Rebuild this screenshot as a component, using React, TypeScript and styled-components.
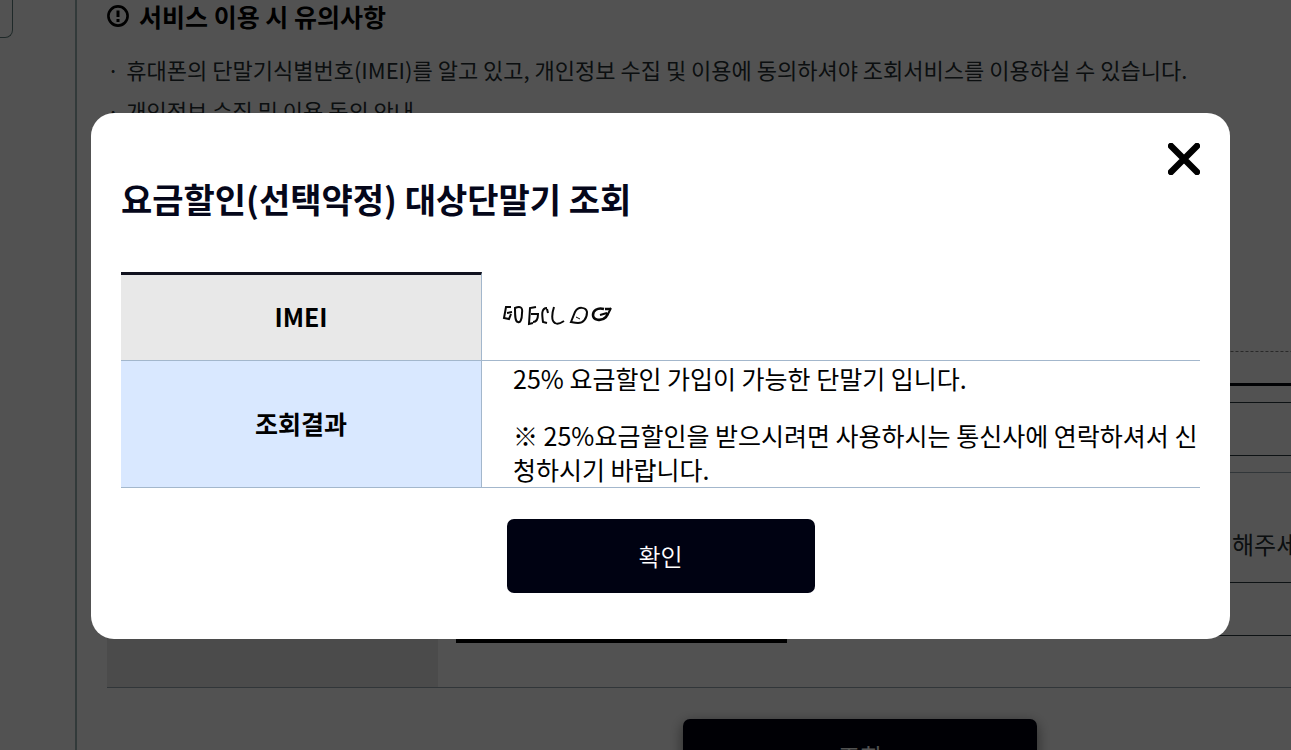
import React from 'react';
import styled, { createGlobalStyle } from 'styled-components';

const GlobalStyle = createGlobalStyle`
  * { box-sizing: border-box; }
  body {
    margin: 0;
    background: #fff;
    color: #000;
    font-family: "Noto Sans CJK KR", "Noto Sans", sans-serif;
  }
  h1, h2, p, ul { margin: 0; padding: 0; }
  button, input { font-family: inherit; }
`;

const Page = styled.div`
  display: flex;
  height: 100vh;
  overflow: hidden;
`;

const Sidebar = styled.aside`
  flex: 0 0 75px;
`;

const SideCard = styled.div`
  width: 13px;
  height: 38px;
  border: solid #62807f;
  border-width: 0 1px 1px 0;
  border-bottom-right-radius: 8px;
`;

const Content = styled.main`
  flex: 0 0 auto;
  width: 1538px;
  padding-left: 30px;
  border-left: 2px solid #9bb5b5;
`;

const NoticeTitle = styled.h2`
  display: flex;
  align-items: center;
  gap: 10px;
  height: 31px;
  font-size: 25px;
  line-height: 30px;
  font-weight: 700;
`;

const NoticeList = styled.ul`
  height: 321px;
  padding-top: 18px;
  border-bottom: 1px dashed #808080;
  list-style: none;
`;

const NoticeItem = styled.li`
  display: flex;
  gap: 7px;
  font-size: 22px;
  line-height: 41px;
  color: #263034;
  white-space: nowrap;
`;

const Form = styled.form`
  margin-top: 31px;
`;

const FormTable = styled.table`
  width: 100%;
  border-top: 3px solid #05070f;
  border-collapse: separate;
  border-spacing: 0;
  table-layout: fixed;
`;

const FormHead = styled.th`
  width: 331px;
  background: #e8e8e8;
  border-bottom: 1px solid #98a8b0;
`;

const FormCell = styled.td`
  padding: 16px 0 16px 18px;
  border-bottom: 1px solid #98a8b0;
`;

const CaptchaCell = styled(FormCell)`
  height: 215px;
  padding-bottom: 44px;
  vertical-align: bottom;
`;

const Field = styled.input`
  display: block;
  width: 100%;
  height: 54px;
  border: 1px solid #29383f;
  background: #fff;
`;

const CaptchaRow = styled.div`
  display: grid;
  grid-template-columns: 331px 1fr;
  column-gap: 429px;
  align-items: end;
`;

const CaptchaImage = styled.div`
  height: 60px;
  background: #000;
`;

const CaptchaEntry = styled.div`
  padding-bottom: 7px;
`;

const CaptchaHint = styled.p`
  padding: 0 0 21px 16px;
  font-size: 24px;
  line-height: 34px;
  color: #263034;
`;

const Button = styled.button<{ $width: number }>`
  display: block;
  width: ${(p) => p.$width}px;
  height: 74px;
  margin: 31px auto 0;
  padding: 0;
  border: 0;
  border-radius: 7px;
  background: #000212;
  color: #fff;
  font-size: 24px;
  line-height: 34px;
  font-weight: 350;
`;

const SearchButton = styled(Button)`
  box-shadow: 0 4px 14px rgba(0, 0, 0, 0.5);
`;

const Overlay = styled.div`
  position: fixed;
  inset: 0;
  padding: 113px 61px 0 91px;
  background: rgba(0, 0, 0, 0.68);
`;

const Dialog = styled.section`
  display: flex;
  flex-direction: column;
  padding: 30px 30px 46px;
  border-radius: 23px;
  background: #fff;
`;

const CloseButton = styled.button`
  align-self: flex-end;
  width: 32px;
  height: 32px;
  padding: 0;
  border: 0;
  background: none;
  svg { display: block; }
`;

const DialogTitle = styled.h1`
  margin-bottom: 50px;
  font-size: 34px;
  line-height: 47px;
  font-weight: 700;
  color: #05071a;
`;

const ResultTable = styled.table`
  width: 100%;
  border-collapse: separate;
  border-spacing: 0;
  table-layout: fixed;
`;

const ResultHead = styled.th<{ $tone: 'gray' | 'blue' }>`
  width: 361px;
  padding: 0 0 3px;
  border-top: ${(p) => (p.$tone === 'gray' ? '3px solid #11121f' : '0')};
  border-right: 1px solid #a3b7cc;
  border-bottom: 1px solid #a3b7cc;
  background: ${(p) => (p.$tone === 'gray' ? '#e8e8e8' : '#d9e8ff')};
  font-size: 25px;
  line-height: 34px;
  font-weight: 700;
`;

const ResultCell = styled.td`
  height: 89px;
  padding: 0 0 1px 31px;
  border-bottom: 1px solid #a3b7cc;
  font-size: 25px;
  line-height: 34px;
  p + p { margin-top: 23px; }
`;

const ImeiCell = styled(ResultCell)`
  padding-left: 20px;
  svg { display: block; }
`;

function ImeiScribble() {
  return (
    <svg width="112" height="24" viewBox="0 0 112 24" fill="none" stroke="#080808" strokeWidth="2" role="img" aria-label="IMEI">
      <path d="M9 3H4L2 14L7 15L9 10M5 9L10 8" strokeWidth="2" />
      <path d="M13 4C18 2 21 3 20 9C20 16 18 19 16 18C13 18 13 11 13 4Z" />
      <path d="M34 3L28 4L27 20L31 19M29 10H36C36 15 35 18 31 18" />
      <path d="M45 4C39 4 40 11 41 18L45 19M45 5L46 9" />
      <path d="M52 3C50 9 49 17 53 19C56 21 59 19 62 17" strokeWidth="2" />
      <path d="M69 18L73 8C76 2 84 3 85 8C85 15 81 19 76 19C72 19 70 18 69 18Z" />
      <path d="M74 13L78 15" strokeWidth="1" />
      <path d="M109 5H103M102 5C95 3 91 7 91 11C91 16 99 18 104 13L106 9" strokeWidth="2.6" />
      <path d="M98 11L105 9M109 4L105 12" strokeWidth="2" />
    </svg>
  );
}

export default function App() {
  return (
    <>
      <GlobalStyle />
      <Page>
        <Sidebar>
          <SideCard />
        </Sidebar>
        <Content>
          <NoticeTitle>
            <svg width="22" height="22" viewBox="0 0 22 22" fill="none" stroke="#000" aria-hidden="true">
              <circle cx="11" cy="11" r="9.6" strokeWidth="2.6" />
              <path d="M11 5.5V12" strokeWidth="3" />
              <path d="M11 14V17" strokeWidth="3" />
            </svg>
            서비스 이용 시 유의사항
          </NoticeTitle>
          <NoticeList>
            <NoticeItem>
              <span>·</span>
              휴대폰의 단말기식별번호(IMEI)를 알고 있고, 개인정보 수집 및 이용에 동의하셔야 조회서비스를 이용하실 수 있습니다.
            </NoticeItem>
            <NoticeItem>
              <span>·</span>
              개인정보 수집 및 이용 동의 안내
            </NoticeItem>
          </NoticeList>
          <Form>
            <FormTable>
              <tbody>
                <tr>
                  <FormHead scope="row" />
                  <FormCell>
                    <Field type="text" aria-label="IMEI" />
                  </FormCell>
                </tr>
                <tr>
                  <FormHead scope="row" />
                  <CaptchaCell>
                    <CaptchaRow>
                      <CaptchaImage />
                      <CaptchaEntry>
                        <CaptchaHint>해주세요.</CaptchaHint>
                        <Field type="text" aria-label="해주세요." />
                      </CaptchaEntry>
                    </CaptchaRow>
                  </CaptchaCell>
                </tr>
              </tbody>
            </FormTable>
            <SearchButton type="button" $width={354}>조회</SearchButton>
          </Form>
        </Content>
      </Page>
      <Overlay>
        <Dialog role="dialog" aria-modal="true" aria-labelledby="dialog-title">
          <CloseButton type="button" aria-label="닫기">
            <svg width="32" height="32" viewBox="0 0 32 32" fill="none" stroke="#000" strokeWidth="6.4" strokeLinecap="round">
              <path d="M3 3L29 29M29 3L3 29" />
            </svg>
          </CloseButton>
          <DialogTitle id="dialog-title">요금할인(선택약정) 대상단말기 조회</DialogTitle>
          <ResultTable>
            <tbody>
              <tr>
                <ResultHead scope="row" $tone="gray">IMEI</ResultHead>
                <ImeiCell>
                  <ImeiScribble />
                </ImeiCell>
              </tr>
              <tr>
                <ResultHead scope="row" $tone="blue">조회결과</ResultHead>
                <ResultCell>
                  <p>25% 요금할인 가입이 가능한 단말기 입니다.</p>
                  <p>※ 25%요금할인을 받으시려면 사용하시는 통신사에 연락하셔서 신청하시기 바랍니다.</p>
                </ResultCell>
              </tr>
            </tbody>
          </ResultTable>
          <Button type="button" $width={308}>확인</Button>
        </Dialog>
      </Overlay>
    </>
  );
}
